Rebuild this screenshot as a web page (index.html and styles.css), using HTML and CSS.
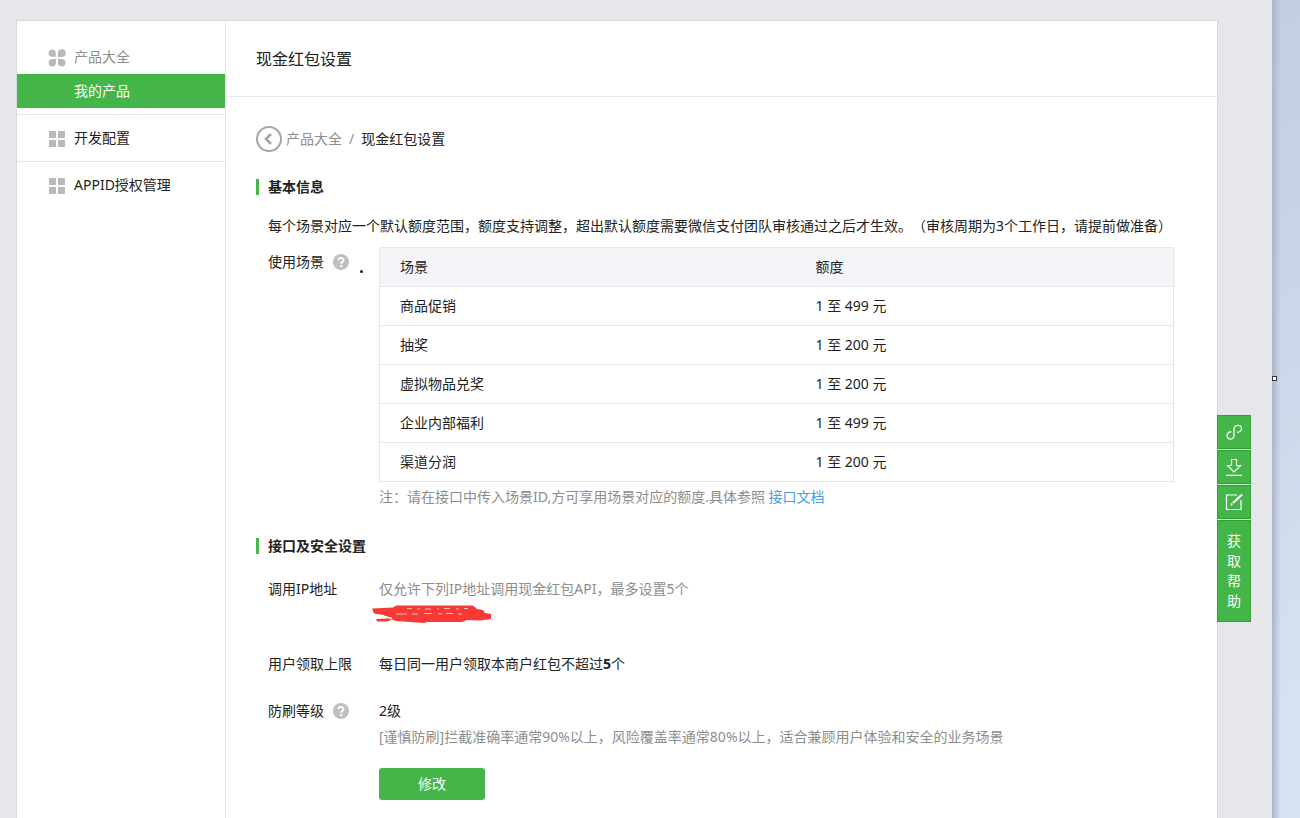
FILE: index.html
```html
<!DOCTYPE html>
<html lang="zh-CN">
<head>
<meta charset="utf-8">
<title>现金红包设置</title>
<link rel="stylesheet" href="styles.css">
</head>
<body>
<div class="page">
  <div class="card">
    <nav class="sidebar">
      <div class="group">
        <a class="item muted" href="#">
          <svg class="item-icon" viewBox="0 0 18 18" fill="#b9b9b9"><path d="M7.800 7.800H4.200A3.600 3.600 0 1 1 7.800 4.200ZM10 8V4.300A3.900 3.900 0 1 1 13.900 8ZM8 10V13.500A3.700 3.700 0 1 1 4.300 10ZM10 10H13.500A3.700 3.700 0 1 1 10 13.500Z"/></svg>
          产品大全</a>
        <a class="item active" href="#">我的产品</a>
      </div>
      <a class="item tall" href="#">
        <svg class="item-icon" viewBox="0 0 18 18" fill="#b9b9b9"><path d="M1 1h7v7H1zM10 1h7v7h-7zM1 10h7v7H1zM10 10h7v7h-7z"/></svg>
        开发配置</a>
      <a class="item tall" href="#">
        <svg class="item-icon" viewBox="0 0 18 18" fill="#b9b9b9"><path d="M1 1h7v7H1zM10 1h7v7h-7zM1 10h7v7H1zM10 10h7v7h-7z"/></svg>
        APPID授权管理</a>
    </nav>

    <main class="content">
      <h1 class="title">现金红包设置</h1>
      <div class="body">
        <div class="crumbs">
          <a class="back" href="#" aria-label="返回"><svg viewBox="0 0 26 26" fill="none" stroke="#a5a5a5"><circle cx="13" cy="13" r="12" stroke-width="2"/><path d="M15 8l-5 5 5 5" stroke-width="2.600"/></svg></a>
          <a class="crumb" href="#">产品大全</a>
          <span class="slash">/</span>
          <span>现金红包设置</span>
        </div>

        <h2 class="section-title">基本信息</h2>
        <div class="section">
          <p class="intro">每个场景对应一个默认额度范围，额度支持调整，超出默认额度需要微信支付团队审核通过之后才生效。（审核周期为3个工作日，请提前做准备）</p>
          <div class="row">
            <div class="label scene-label">使用场景
              <svg class="help" viewBox="0 0 16 16"><circle cx="8" cy="8" r="8" fill="#bfbfbf"/><path d="M5.500 6.300C5.500 3.200 10.600 3.200 10.600 6.100C10.600 7.700 8.200 7.800 8.200 9.700" fill="none" stroke="#fff" stroke-width="1.800"/><path d="M7.200 11h2v2h-2z" fill="#fff"/></svg>
              <span class="dot"></span>
            </div>
            <div>
              <table class="quota">
                <thead><tr><th scope="col">场景</th><th scope="col">额度</th></tr></thead>
                <tbody>
                  <tr><td>商品促销</td><td>1 至 499 元</td></tr>
                  <tr><td>抽奖</td><td>1 至 200 元</td></tr>
                  <tr><td>虚拟物品兑奖</td><td>1 至 200 元</td></tr>
                  <tr><td>企业内部福利</td><td>1 至 499 元</td></tr>
                  <tr><td>渠道分润</td><td>1 至 200 元</td></tr>
                </tbody>
              </table>
              <p class="note">注：请在接口中传入场景ID,方可享用场景对应的额度.具体参照 <a class="link" href="#">接口文档</a></p>
            </div>
          </div>
        </div>

        <h2 class="section-title second">接口及安全设置</h2>
        <div class="section settings">
          <div class="row">
            <div class="label">调用IP地址</div>
            <div class="ip">
              <p class="muted">仅允许下列IP地址调用现金红包API，最多设置5个</p>
              <svg class="scribble" viewBox="0 0 120 20"><path d="M0 4.500L21 3.500 24 1.500H101L105 5 111 6 113 9 119 10V15L108 16.500 95 16 90 18H55L52 19 24 17 20 15.500 15 17.500 5 17.500 4 15 15 14.500 12 11 2 9.500Z" fill="#f83a36"/><path d="M35 4.500h5M45 5h3M53 5h6M65 5h2M72 4.500h6M84 5h3M92 4.500h4M24 10h11M40 10h6M52 9.500h8M66 10h4M74 9.500h7M86 10h4" stroke="#fbb"/><path d="M12 12.500l8 2" stroke="#fff" stroke-width="1.500"/></svg>
            </div>
          </div>
          <div class="row">
            <div class="label">用户领取上限</div>
            <p>每日同一用户领取本商户红包不超过<b>5</b>个</p>
          </div>
          <div class="row level">
            <div class="label">防刷等级
              <svg class="help" viewBox="0 0 16 16"><circle cx="8" cy="8" r="8" fill="#bfbfbf"/><path d="M5.500 6.300C5.500 3.200 10.600 3.200 10.600 6.100C10.600 7.700 8.200 7.800 8.200 9.700" fill="none" stroke="#fff" stroke-width="1.800"/><path d="M7.200 11h2v2h-2z" fill="#fff"/></svg>
            </div>
            <div>
              <p>2级</p>
              <p class="muted">[谨慎防刷]拦截准确率通常90%以上，风险覆盖率通常80%以上，适合兼顾用户体验和安全的业务场景</p>
              <button class="edit" type="button">修改</button>
            </div>
          </div>
        </div>
      </div>
    </main>

    <aside class="tools">
      <button class="tool" type="button" aria-label="链接"><svg viewBox="0 0 18 18" fill="none" stroke="#fff" stroke-width="1.200"><path d="M6.500 9C4 8.500 2 10.500 2 12.500C2 17.500 9 17 9 12.500V6.500C9 1.500 16.500 1 16.500 5.500C16.500 8 14.500 9.500 12 9.200"/></svg></button>
      <button class="tool" type="button" aria-label="下载"><svg viewBox="0 0 18 18" fill="none" stroke="#fff" stroke-width="1.200"><path d="M6.500 1.500h5v6h4L9 14 2.500 7.500h4zM1 17.400h16"/></svg></button>
      <button class="tool" type="button" aria-label="编辑"><svg viewBox="0 0 18 18" fill="none" stroke="#fff" stroke-width="1.200"><path d="M12 2H1.500V16.500H16V7"/><path d="M17 1.500L8 10" stroke-width="2.200"/><path d="M7 10.500l-1 2" stroke-width="1.800"/></svg></button>
      <button class="tool help-tab" type="button">获取帮助</button>
    </aside>
  </div>
</div>
<div class="edge"><span class="handle"></span></div>
</body>
</html>
```
FILE: styles.css
```css
* { box-sizing: border-box; }
body {
  margin: 0;
  min-height: 100vh;
  display: flex;
  background: #e7e7eb;
  color: #222;
  font: 14px/24px "Noto Sans", "Noto Sans CJK SC", sans-serif;
  text-spacing-trim: space-all;
}
p, h1, h2 { margin: 0; }
a { color: inherit; text-decoration: none; }
svg { display: block; }
button { font: inherit; border: 0; cursor: pointer; }
.muted { color: #8d8d8d; }

.page { flex: 1; display: flex; padding: 20px 54px 0 16px; }
.card {
  position: relative;
  flex: 1;
  display: flex;
  background: #fff;
  border: 1px solid #d9dadc;
  border-bottom: 0;
}

.sidebar { width: 209px; padding-top: 19px; border-right: 1px solid #e7e7eb; }
.group { padding-bottom: 6px; }
.item { display: flex; align-items: center; gap: 8px; padding-left: 31px; line-height: 34px; }
.item-icon { width: 18px; height: 18px; margin-top: 2px; }
.item.active { padding-left: 57px; background: #44b549; color: #fff; }
.item.tall { line-height: 46px; border-top: 1px solid #e7e7eb; }

.content { flex: 1; }
.title {
  padding: 1px 0 0 30px;
  border-bottom: 1px solid #e7e7eb;
  font-size: 16px;
  font-weight: 400;
  line-height: 74px;
}
.body { padding: 29px 43px 18px 30px; }
.crumbs { display: flex; align-items: center; height: 26px; }
.back { width: 26px; margin-right: 4px; }
.crumb { color: #8d8d8d; }
.slash { margin: 0 7px; color: #8d8d8d; }

.section-title {
  margin-top: 27px;
  padding-left: 9px;
  border-left: 3px solid #44b549;
  font-size: 14px;
  line-height: 16px;
}
.section-title.second { margin-top: 29px; }
.section { padding-left: 12px; }
.intro { margin: 19px 0 9px; white-space: nowrap; }
.row { display: grid; grid-template-columns: 111px 1fr; }
.label { position: relative; display: flex; align-items: center; align-self: start; gap: 9px; }
.scene-label { line-height: 30px; }
.help { width: 16px; height: 16px; }
.dot { position: absolute; left: 92px; bottom: 4px; width: 3px; height: 3px; border-radius: 50%; background: #222; }

.quota { width: 100%; border-collapse: collapse; border: 1px solid #e7e7eb; }
.quota th, .quota td { padding: 7px 20px; border-bottom: 1px solid #e7e7eb; font-weight: 400; text-align: left; }
.quota th { background: #f4f5f9; }
.quota th:first-child { width: 416px; }
.note { margin-top: 3px; color: #8d8d8d; }
.link { color: #459ae9; }

.settings { display: grid; gap: 22px; margin-top: 23px; }
.scribble { width: 120px; height: 20px; margin: 3px 0 6px -7px; }
.level { line-height: 26px; }
.edit {
  width: 106px;
  height: 32px;
  margin-top: 18px;
  padding: 0;
  border-radius: 3px;
  background: #44b549;
  color: #fff;
}

.tools { position: absolute; top: 394px; right: -34px; width: 34px; display: grid; gap: 1px; background: #cfeecf; }
.tool {
  display: grid;
  place-items: center;
  height: 34px;
  padding: 0;
  background: #44b549;
  border: 1px solid #2f9e35;
  color: #fff;
}
.tool svg { width: 18px; height: 18px; }
.help-tab { height: 102px; padding: 0 9px; line-height: 20px; }

.edge {
  position: relative;
  width: 28px;
  background: linear-gradient(90deg, #a9b6c9, rgba(169, 182, 201, 0) 9px), linear-gradient(#c4cde1, #d8e2f2 90%);
}
.handle { position: absolute; top: 376px; left: 0; width: 5px; height: 5px; border: 1px solid #333; background: #fff; }
```
